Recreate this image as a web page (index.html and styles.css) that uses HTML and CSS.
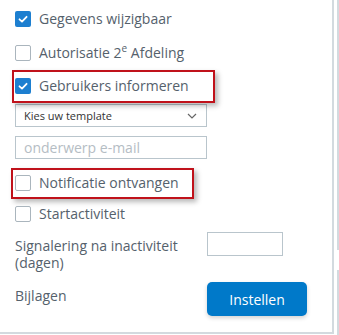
FILE: index.html
```html
<!DOCTYPE html>
<html lang="nl">
<head>
    <meta charset="UTF-8">
    <meta name="viewport" content="width=device-width, initial-scale=1.0">
    <link rel="stylesheet" href="styles.css">
</head>
<body>
    <div class="page">
        <div class="panel">
            <div class="check-row row-1">
                <span class="box checked">
                    <svg viewBox="0 0 16 16" width="16" height="16"><path d="M4.5 8.3 L7 10.6 L11.6 5.8" fill="none" stroke="#fff" stroke-width="1.8" stroke-linecap="round" stroke-linejoin="round"/></svg>
                </span>
                <span class="label">Gegevens wijzigbaar</span>
            </div>
            <div class="check-row row-2">
                <span class="box"></span>
                <span class="label">Autorisatie 2<sup>e</sup> Afdeling</span>
            </div>
            <div class="check-row row-3 marked marked-wide">
                <span class="box checked">
                    <svg viewBox="0 0 16 16" width="16" height="16"><path d="M4.5 8.3 L7 10.6 L11.6 5.8" fill="none" stroke="#fff" stroke-width="1.8" stroke-linecap="round" stroke-linejoin="round"/></svg>
                </span>
                <span class="label">Gebruikers informeren</span>
            </div>
            <div class="select">
                <span>Kies uw template</span>
                <svg viewBox="0 0 10 6" width="10" height="6"><path d="M1 1 L5 5 L9 1" fill="none" stroke="#666" stroke-width="1.2"/></svg>
            </div>
            <div class="text-input">onderwerp e-mail</div>
            <div class="check-row row-4 marked marked-narrow">
                <span class="box"></span>
                <span class="label">Notificatie ontvangen</span>
            </div>
            <div class="check-row row-5">
                <span class="box"></span>
                <span class="label">Startactiviteit</span>
            </div>
            <div class="settings">
                <div class="setting-label">Signalering na inactiviteit (dagen)</div>
                <div class="small-input"></div>
                <div class="setting-label">Bijlagen</div>
                <button class="btn">Instellen</button>
            </div>
        </div>
        <div class="edge"></div>
    </div>
</body>
</html>
```

FILE: styles.css
```css
body {
    margin: 0;
    font-family: 'Open Sans', 'Liberation Sans', sans-serif;
    font-size: 14px;
    color: #55616c;
    background: #fff;
}
.page {
    display: flex;
    width: 339px;
    height: 335px;
}
.panel {
    box-sizing: border-box;
    width: 334px;
    height: 334px;
    border-right: 2px solid #d3dadf;
    border-bottom: 2px solid #d3dadf;
    padding: 11px 0 0 15px;
}
.edge {
    width: 2px;
    height: 335px;
    margin-left: 3px;
    background: linear-gradient(to bottom, #d3dadf 0, #d3dadf 250px, transparent 250px, transparent 270px, #d3dadf 270px);
}
.check-row {
    display: flex;
    align-items: center;
    height: 16px;
    position: relative;
}
.row-1 { margin-bottom: 18px; }
.row-2 { margin-bottom: 17px; }
.row-3 { margin-bottom: 10px; }
.row-4 { margin-top: 16px; margin-bottom: 15px; }
.box {
    box-sizing: border-box;
    width: 16px;
    height: 16px;
    border: 1px solid #aab5bd;
    border-radius: 2px;
    background: #fff;
    flex-shrink: 0;
}
.box.checked {
    border: none;
    background: #1d7fd0;
}
.box svg {
    display: block;
}
.label {
    margin-left: 8px;
    line-height: 16px;
    white-space: nowrap;
}
.label sup {
    font-size: 10px;
    line-height: 0;
    vertical-align: 6px;
}
.marked::after {
    content: "";
    position: absolute;
    border: 2px solid #c0121b;
    box-shadow: 3px 3px 5px rgba(0, 0, 0, 0.28);
    box-sizing: border-box;
}
.marked-wide::after {
    left: -3px;
    top: -8px;
    width: 203px;
    height: 33px;
}
.marked-narrow::after {
    left: -4px;
    top: -7px;
    width: 183px;
    height: 31px;
}
.select, .text-input {
    box-sizing: border-box;
    width: 192px;
    height: 23px;
    border: 1px solid #b9c5cc;
    display: flex;
    align-items: center;
    padding-left: 8px;
}
.select {
    justify-content: space-between;
    padding-right: 9px;
    font-size: 11px;
    color: #333;
    margin-bottom: 9px;
}
.select svg {
    display: block;
}
.text-input {
    color: #b5bdc4;
}
.settings {
    display: grid;
    grid-template-columns: 192px 100px;
    row-gap: 11px;
    margin-top: 10px;
}
.setting-label {
    margin-top: 5px;
    line-height: 17px;
    padding-right: 10px;
}
.small-input {
    box-sizing: border-box;
    width: 76px;
    height: 24px;
    border: 1px solid #b9c5cc;
}
.btn {
    width: 100px;
    height: 34px;
    border: none;
    border-radius: 5px;
    background: #0079c9;
    color: #fff;
    font-family: 'Open Sans', 'Liberation Sans', sans-serif;
    font-size: 14px;
    box-shadow: 0 2px 4px rgba(0, 0, 0, 0.18);
    padding: 0;
}
```
